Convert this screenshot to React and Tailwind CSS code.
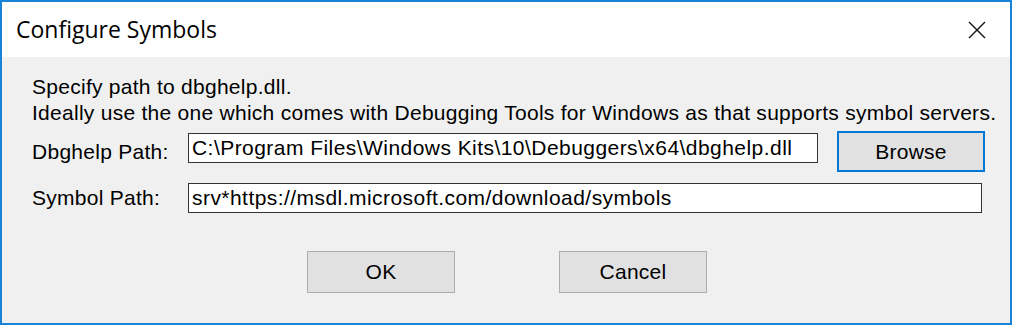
import React from 'react';

function CloseIcon() {
  return (
    <svg width="18" height="18" viewBox="0 0 18 18" className="text-[#111]">
      <path d="M1 1 L17 17 M17 1 L1 17" stroke="currentColor" strokeWidth="1.4" fill="none" />
    </svg>
  );
}

export default function App() {
  return (
    <div className="w-[1012px] h-[325px] border-2 border-[#1883d7] flex flex-col bg-[#f0f0f0] text-black overflow-hidden">
      <div className="h-[55px] bg-white flex items-center justify-between pl-[14px] pr-[24px] shrink-0">
        <span className="text-[23px] font-['Open_Sans',sans-serif] leading-none">Configure Symbols</span>
        <CloseIcon />
      </div>

      <div className="flex-1 flex flex-col pl-[30px] font-['Liberation_Sans',Arial,sans-serif] text-[21px] tracking-[0.27px]">
        <div className="pt-[17px] leading-[26px]">
          <p>Specify path to dbghelp.dll.</p>
          <p>Ideally use the one which comes with Debugging Tools for Windows as that supports symbol servers.</p>
        </div>

        <div className="flex items-start mt-[5px] h-[41px]">
          <span className="w-[156px] mt-[5px]">Dbghelp Path:</span>
          <div className="mt-[2px] w-[630px] h-[30px] border border-[#333] bg-white flex items-center px-[3px] tracking-[0.45px]">
            C:\Program Files\Windows Kits\10\Debuggers\x64\dbghelp.dll
          </div>
          <button className="ml-[19px] w-[148px] h-[41px] border-2 border-[#0078d7] bg-[#e1e1e1]">Browse</button>
        </div>

        <div className="flex items-center mt-[11px] h-[30px]">
          <span className="w-[156px]">Symbol Path:</span>
          <div className="w-[794px] h-[30px] border border-[#333] bg-white flex items-center px-[3px] tracking-[0.45px]">
            srv*https://msdl.microsoft.com/download/symbols
          </div>
        </div>

        <div className="flex mt-[38px] pl-[275px] gap-[104px]">
          <button className="w-[148px] h-[42px] border border-[#adadad] bg-[#e1e1e1]">OK</button>
          <button className="w-[148px] h-[42px] border border-[#adadad] bg-[#e1e1e1]">Cancel</button>
        </div>
      </div>
    </div>
  );
}
